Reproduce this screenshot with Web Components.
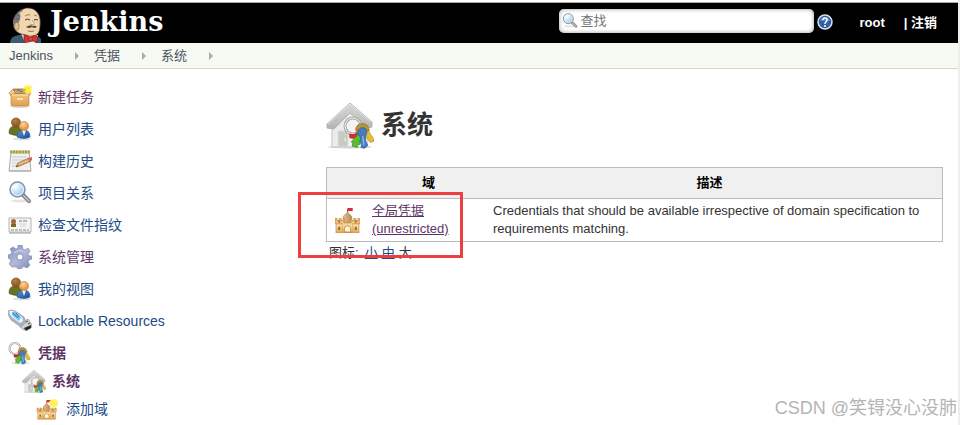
<!DOCTYPE html>
<html lang="zh-CN">
<head>
<meta charset="utf-8">
<meta name="viewport" content="width=device-width, initial-scale=1">
<title>系统 [Jenkins]</title>
<style>
  html {
    background: #fff;
  }

  body {
    margin: 0;
    font: 13px/18px "Liberation Sans", "Noto Sans CJK SC", sans-serif;
    color: #333;
  }
</style>
</head>
<body>
<jenkins-page>
  <page-header slot="header"></page-header>
  <bread-crumbs slot="crumbs">
    <crumb-item href="#jenkins">Jenkins</crumb-item>
    <crumb-item href="#credentials">凭据</crumb-item>
    <crumb-item href="#system">系统</crumb-item>
  </bread-crumbs>
  <task-list slot="side">
    <task-link icon="box" href="#new" visited>新建任务</task-link>
    <task-link icon="users" href="#people">用户列表</task-link>
    <task-link icon="notepad" href="#history">构建历史</task-link>
    <task-link icon="search" href="#relations">项目关系</task-link>
    <task-link icon="card" href="#fingerprint">检查文件指纹</task-link>
    <task-link icon="gear" href="#manage" visited>系统管理</task-link>
    <task-link icon="users" href="#views">我的视图</task-link>
    <task-link icon="usb" href="#lockable">Lockable Resources</task-link>
    <task-link icon="keys" href="#credentials" visited current>凭据</task-link>
    <task-link icon="house" href="#system" level="1" visited current>系统</task-link>
    <task-link icon="castle-new" href="#add-domain" level="2">添加域</task-link>
  </task-list>
  <page-title icon="house">系统</page-title>
  <domain-table></domain-table>
  <icon-sizes></icon-sizes>
  <span slot="watermark">CSDN @笑锝没心没肺</span>
</jenkins-page>

<script>
// bunch of keys, shared by the credentials and the system icon
const KEYS = `
  <g stroke-linejoin="round">
    <path d="M29 25 L22 29 L17 28 L17 33 L22 34 L31 29z" fill="#d92b2b" stroke="#b32020"/>
    <path d="M28 28 L24 34 L19 38 L21 41 L20 44 L27 46 L28 42 L31 42 L30 38 L34 30z" fill="#56bd2f" stroke="#3c9a22"/>
    <path d="M36 22 L38 30 L41 35 L44 39 L49 38 L48 33 L45 29 L42 23z" fill="#e5bd39" stroke="#b78d22"/>
    <path d="M25 23 Q25 15 33 14 Q42 14 43 23 L38 25 L34 20 L29 22 L28 28z" fill="#dd7434" stroke="#b9622a"/>
    <path d="M28 20 Q33 14 41 21" fill="none" stroke="#86b03c" stroke-width="3"/>
    <path d="M28 25 Q30 18 37 20 Q42 24 38 31 L38 37 L41 43 L37 47 L32 46 L33 42 L30 38 L32 35 L31 31 Q26 30 28 25z" fill="#467dc1" stroke="#2f5f9f"/>
    <path d="M34 31 L36 43" stroke="#8db6e4" stroke-width="2"/>
  </g>`;

const CASTLE = `
  <path d="M12 1v5" stroke="#92602c"/>
  <path d="M12 0h5v3h-5z" fill="#d82d3d"/>
  <path d="M8 16V8l4-4 4 4v8z" fill="url(#keep)" stroke="#b98243" stroke-width=".7"/>
  <path d="M0 10h2v2h2v-2h2v2h2v-2h1v4h6v-4h1v2h2v-2h2v2h2v-2h2v5h-1v9H1v-9H0z" fill="url(#stone)" stroke="#c98e45" stroke-width=".7"/>
  <path d="M8 14h8M1 15h6M17 15h6" stroke="#c98e45" stroke-width=".7"/>
  <path d="M7 15v8M17 15v8" stroke="#dba65e" stroke-width=".7"/>
  <path d="M9 23v-3a3 3 0 0 1 6 0v3z" fill="#fff4dc" stroke="#b2742d" stroke-width=".7"/>
  <path d="M3 12h2v2H3zM19 12h2v2h-2z" fill="#a5703a"/>
  <path d="M3 18h2v3H3zM19 18h2v3h-2z" fill="#9f6a35"/>`;

const STONE = `
  <linearGradient id="stone" x1="0" y1="0" x2="0" y2="1">
    <stop offset="0" stop-color="#e0aa66"/><stop offset=".5" stop-color="#fbdc9f"/><stop offset="1" stop-color="#e2a354"/>
  </linearGradient>
  <linearGradient id="keep" x1="0" y1="0" x2="1" y2="0">
    <stop offset="0" stop-color="#dfbf91"/><stop offset="1" stop-color="#b98a55"/>
  </linearGradient>`;

const ICONS = {
  box: {
    size: 24,
    art: `
      <defs><linearGradient id="board" x1="0" y1="0" x2="0" y2="1">
        <stop offset="0" stop-color="#f2c57d"/><stop offset="1" stop-color="#dd9d4d"/>
      </linearGradient></defs>
      <ellipse cx="12" cy="21" rx="10" ry="2" fill="#ddd"/>
      <path d="M5 4h14l3 5H2z" fill="#a6783f" stroke="#c58a42"/>
      <path d="M7 5h9l1 3H7z" fill="#b7a88c"/>
      <path d="M9 6l2-1 2 2 2-1" fill="none" stroke="#786c57"/>
      <path d="M5 4L1 8l2 3h3l1-3zM19 4l4 4-2 3h-3l-1-3z" fill="#f4cf92" stroke="#c98d45" stroke-width=".7"/>
      <path d="M3 9h18v10q0 2-2 2H5q-2 0-2-2z" fill="url(#board)" stroke="#c58640" stroke-width=".7"/>
      <path d="M4 10h16" stroke="#ffe4ac"/>
      <path d="M9 13h6v2H9z" fill="#fbe1aa"/>
      <circle cx="20" cy="4" r="5" fill="#fff45e" opacity=".5"/>
      <path d="M20 0l1 2 3 0-2 2 1 3-3-1-3 1 1-3-2-2h3z" fill="#fff025"/>`,
  },
  users: {
    size: 24,
    art: `
      <defs>
        <radialGradient id="skin" cx=".4" cy=".3" r=".8"><stop offset="0" stop-color="#ffd197"/><stop offset="1" stop-color="#d98427"/></radialGradient>
        <radialGradient id="tan" cx=".4" cy=".3" r=".8"><stop offset="0" stop-color="#b98045"/><stop offset="1" stop-color="#7d4a1c"/></radialGradient>
        <linearGradient id="shirt" x1="0" y1="0" x2="1" y2="1"><stop offset="0" stop-color="#6195d7"/><stop offset="1" stop-color="#174995"/></linearGradient>
      </defs>
      <ellipse cx="14" cy="22" rx="9" ry="1.5" fill="#ddd"/>
      <path d="M1 16q0-7 6-7 7 0 8 8-6 3-13 0z" fill="#667323" stroke="#535f1d" stroke-width=".7"/>
      <circle cx="8" cy="5.5" r="4.5" fill="url(#tan)" stroke="#7d4d20" stroke-width=".7"/>
      <path d="M9 20q0-7 7-7 6 0 6 7-6 3-13 0z" fill="url(#shirt)" stroke="#2d5c9d" stroke-width=".7"/>
      <path d="M14 13l2 6 2-6z" fill="#eef5ff"/>
      <circle cx="16" cy="9" r="4.5" fill="url(#skin)" stroke="#c98340" stroke-width=".7"/>`,
  },
  notepad: {
    size: 24,
    art: `
      <path d="M3 3h18l2 19H1z" fill="#f1f2ef" stroke="#aaada9"/>
      <path d="M2 1h20v4H2z" fill="#d4cb82"/>
      <path d="M3 2v2M6 2v2M9 2v2M12 2v2M15 2v2M18 2v2M21 2v2" stroke="#5c7050"/>
      <path d="M4 8h15M4 11h13M4 14h6M4 17h4" stroke="#c5cacb"/>
      <path d="M8 18l2-4 11-5 2 3-11 5z" fill="#d6a466" stroke="#9a6844" stroke-width=".7"/>
      <path d="M11 15l11-4" stroke="#f3c890"/>
      <path d="M20 9l4-1v3l-3 2z" fill="#d2695a"/>
      <path d="M8 18l2-1-1-1z" fill="#393430"/>
      <path d="M1 22h22" stroke="#aaa"/>`,
  },
  search: {
    size: 24,
    art: `
      <defs><radialGradient id="lens" cx=".35" cy=".3" r=".8">
        <stop offset="0" stop-color="#fff"/><stop offset=".5" stop-color="#c4e0f6"/><stop offset="1" stop-color="#8db9e2"/>
      </radialGradient></defs>
      <ellipse cx="11" cy="20" rx="8" ry="1.5" fill="#e4e4e4"/>
      <path d="M15 14l6 6" stroke="#777" stroke-width="4" stroke-linecap="round"/>
      <path d="M16 15l5 5" stroke="#bbb" stroke-width="2" stroke-linecap="round"/>
      <circle cx="9.5" cy="8.5" r="7.5" fill="url(#lens)" stroke="#8294a8" stroke-width="1.5"/>
      <circle cx="9.5" cy="8.5" r="6" fill="none" stroke="#edf7ff"/>
      <path d="M5 8q1-4 5-4" fill="none" stroke="#fff" stroke-width="1.5"/>`,
  },
  card: {
    size: 24,
    art: `
      <path d="M1 5h22v14H1z" fill="#f4f4f1" stroke="#b4b4b4"/>
      <path d="M1 20h22" stroke="#999"/>
      <path d="M3 14v-3q3-2 5 0v3z" fill="#5f7d2b"/>
      <circle cx="5.5" cy="8.5" r="2.5" fill="#a86530"/>
      <path d="M4 11l2 3 2-3" fill="#9c4e28"/>
      <path d="M11 8h3M15 8h4" stroke="#777"/>
      <path d="M11 11h8M12 13h6" stroke="#d4d4d4"/>
      <path d="M3 17h18" stroke="#888" stroke-dasharray="3 1"/>`,
  },
  gear: {
    size: 24,
    art: `
      <defs><linearGradient id="steel" x1="0" y1="0" x2="1" y2="1">
        <stop offset="0" stop-color="#7f88b4"/><stop offset=".5" stop-color="#b3bbdb"/><stop offset="1" stop-color="#7983b1"/>
      </linearGradient></defs>
      <ellipse cx="12" cy="22" rx="9" ry="1.5" fill="#ddd"/>
      <path fill-rule="evenodd" d="M10 0h4l1 4 2 1 3-2 2 3-2 3 1 2 3 0v3l-3 1-1 2 2 3-3 3-3-2-2 1-1 2h-3l-1-2-3-1-2 1-3-3 2-3-1-2-2-1v-3l3-1 1-2-2-3 3-2 3 2 2-1zM9 12a3 3 0 1 0 6 0 3 3 0 1 0-6 0z" fill="url(#steel)" stroke="#8790b4" stroke-width=".7"/>
      <circle cx="12" cy="12" r="3.5" fill="none" stroke="#98a1c6"/>
      <path d="M6 8q4-4 9-2" fill="none" stroke="#d5dbf0"/>`,
  },
  usb: {
    size: 24,
    art: `
      <path d="M14 14l6-4 4 6-1 3-7 2-4-3z" fill="#d0d3d3" stroke="#888b8d" stroke-width=".7"/>
      <path d="M16 19l7-3v3l-5 3z" fill="#26292b"/>
      <path d="M0 2q3-2 7 0l9 6 2 5-5 5L3 11Q0 7 0 2z" fill="#aab4c0" stroke="#8b98a5" stroke-width=".7"/>
      <path d="M1 2q3-1 6 1l7 5 1 4-3 2L4 8Q1 5 1 2z" fill="#eaf5fd"/>
      <path d="M4 3l4 0 5 5-2 4-6-5q-2-2-1-4z" fill="#6fc2ea"/>
      <path d="M5 4l5 5M8 4l3 4" stroke="#2385b8"/>
      <path d="M18 13l2-1M20 15l2-1" stroke="#444"/>`,
  },
  keys: {
    size: 48,
    art: `
      <ellipse cx="25" cy="44" rx="19" ry="3" fill="#e3e3e3"/>
      <circle cx="14" cy="15" r="11" fill="none" stroke="#999" stroke-width="4"/>
      <circle cx="14" cy="15" r="11" fill="none" stroke="#efefef" stroke-width="2"/>
      <g transform="translate(-5 -1)">${KEYS}</g>`,
  },
  house: {
    size: 48,
    art: `
      <defs>
        <linearGradient id="roof" x1="0" y1="0" x2="0" y2="1"><stop offset="0" stop-color="#d9d9d7"/><stop offset="1" stop-color="#b4b4b2"/></linearGradient>
        <linearGradient id="wall" x1="0" y1="0" x2="1" y2="1"><stop offset="0" stop-color="#e3e3e1"/><stop offset="1" stop-color="#fafafa"/></linearGradient>
      </defs>
      <ellipse cx="24" cy="46" rx="22" ry="1.5" fill="#d1d1d1"/>
      <path d="M6 24L24 8l17 15v23H6z" fill="url(#wall)" stroke="#c4c4c2"/>
      <path d="M1 27v-4L24 2l22 19v5l-5 1-17-15L8 28z" fill="url(#roof)" stroke="#b4b4b2"/>
      <path d="M2 23L24 3l21 18" fill="none" stroke="#e4e4e2"/>
      <path d="M12 30h10v16H12z" fill="#c9c9c5" stroke="#dedede"/>
      <path d="M19 37v3" stroke="#eee4a9" stroke-width="2"/>
      <circle cx="27" cy="25" r="8" fill="#f4f4f4" stroke="#aaa" stroke-width="3"/>
      <circle cx="27" cy="25" r="8" fill="none" stroke="#eee"/>
      <g transform="translate(11 12) scale(.75)">${KEYS}</g>`,
  },
  castle: {
    size: 24,
    art: `<defs>${STONE}</defs>${CASTLE}`,
  },
  'castle-new': {
    size: 24,
    art: `
      <defs>${STONE}</defs>
      <g transform="translate(1 3) scale(.8)">${CASTLE}</g>
      <circle cx="18" cy="6" r="4" fill="#fff584"/>
      <path d="M18 2l1 3 3-1-1 3 1 2-3 0-1 2-2-2-3 0 1-3-1-2h3z" fill="#fff24f"/>`,
  },
  help: {
    size: 16,
    art: `
      <circle cx="8" cy="8" r="7" fill="#315f9f" stroke="#d5e3f4" stroke-width="1.5"/>
      <path d="M3 7q1-4 5-4t5 4" fill="#608cc3"/>
      <path d="M6 6q0-2 2-2t2 2q0 1-1 2-1 0-1 2" fill="none" stroke="#fff" stroke-width="1.5"/>
      <circle cx="8" cy="12" r="1" fill="#fff"/>`,
  },
  butler: {
    size: 36,
    art: `
      <path d="M2 36q0-5 5-7l8-2 15 2 3 3v4z" fill="#3c5a70"/>
      <path d="M13 26l4 10h10l3-8z" fill="#f0eee8"/>
      <path d="M8 24Q4 20 6 12 9 3 18 1q9-1 13 7 2 5 1 12 0 7-6 9-4 1-9-1-6-1-9-4z" fill="#f1d6ae" stroke="#3b332c" stroke-width=".7"/>
      <path d="M6 18Q4 14 6 11 9 4 16 2q-2 3-5 4 3 2 0 9l-3 2z" fill="#77787b"/>
      <path d="M7 8q3-1 4 1M6 12q3-1 5 0" stroke="#4e5054" stroke-width=".7"/>
      <path d="M7 16q4-2 4 3t-3 4q-3-3-1-7z" fill="#e5bd91" stroke="#8e6d50" stroke-width=".7"/>
      <path d="M17 9q3-2 5-1M26 8l3 1" stroke="#73583f" stroke-width=".7"/>
      <path d="M17 13q3-2 5 0M26 13q2-1 4 0" stroke="#4c3c2f"/>
      <path d="M24 13q4 4 1 5l-3-1" fill="#f7dfbb" stroke="#ab845d" stroke-width=".7"/>
      <path d="M18 20q4-3 7-1 3-1 4 1-3 2-5 0-3 2-6 0z" fill="#5c4a3d"/>
      <path d="M20 24q3 1 6 0" stroke="#9c7356"/>
      <path d="M16 28q3-1 6 3 4-4 7-2l1 6-6-1-8 2z" fill="#d3342e" stroke="#7c2021" stroke-width=".7"/>
      <path d="M21 30h3v4h-3z" fill="#ed5546" stroke="#7c2021" stroke-width=".7"/>`,
  },
};

/**
 * Drawn icon, picked by the "name" attribute. Its box follows --icon-size.
 */
class JkIcon extends HTMLElement {
  connectedCallback() {
    const { size, art } = ICONS[this.getAttribute('name')];
    this.attachShadow({ mode: 'open' }).innerHTML = `
      <style>
        :host {
          display: block;
          flex: none;
          width: var(--icon-size, 24px);
          height: var(--icon-size, 24px);
        }

        svg {
          display: block;
          width: 100%;
          height: 100%;
        }
      </style>
      <svg viewBox="0 0 ${size} ${size}" fill="none" aria-hidden="true">${art}</svg>
    `;
  }
}

/**
 * Page frame: header, breadcrumbs, side panel and main panel
 */
class JenkinsPage extends HTMLElement {
  constructor() {
    super();
    this.attachShadow({ mode: 'open' }).innerHTML = `
      <style>
        :host {
          display: flex;
          flex-direction: column;
          box-sizing: border-box;
          min-height: 100vh;
          position: relative;
          border-right: 2px solid #eee;
        }

        .top {
          height: 2px;
          border-bottom: 1px solid #aaa;
        }

        .columns {
          display: flex;
          align-items: flex-start;
        }

        aside {
          flex: none;
          width: 310px;
          padding-top: 12px;
        }

        main {
          flex: 1;
          min-width: 0;
          padding: 32px 15px 0 16px;
        }

        .watermark {
          position: absolute;
          right: 1px;
          bottom: 6px;
          font-size: 18px;
          line-height: 22px;
          color: #b4b4b4;
        }
      </style>
      <div class="top"></div>
      <slot name="header"></slot>
      <slot name="crumbs"></slot>
      <div class="columns">
        <aside><slot name="side"></slot></aside>
        <main><slot></slot></main>
      </div>
      <div class="watermark"><slot name="watermark"></slot></div>
    `;
  }
}

/**
 * Black bar with the logo, the search box and the account links
 */
class PageHeader extends HTMLElement {
  constructor() {
    super();
    this.attachShadow({ mode: 'open' }).innerHTML = `
      <style>
        :host {
          display: flex;
          align-items: center;
          height: 40px;
          padding: 0 21px 0 8px;
          background: #000;
          color: #fff;
          font-weight: bold;
        }

        a {
          color: inherit;
          text-decoration: none;
        }

        .logo {
          display: flex;
          align-items: center;
          align-self: flex-end;
          gap: 6px;
          margin-right: auto;
          font: bold 27px/30px "DejaVu Serif", serif;
          --icon-size: 36px;
        }

        .logo span {
          padding-bottom: 6px;
        }

        .search {
          display: flex;
          align-items: center;
          gap: 2px;
          box-sizing: border-box;
          width: 255px;
          height: 24px;
          margin: 0 3px 4px 0;
          padding: 0 3px;
          border-radius: 5px;
          background: #fff;
          box-shadow: inset 0 0 4px #999;
          --icon-size: 16px;
        }

        input {
          flex: 1;
          min-width: 0;
          padding: 0;
          border: 0;
          outline: 0;
          background: none;
          font: inherit;
          font-weight: normal;
          color: #333;
        }

        input::placeholder {
          color: #777;
        }

        .help {
          margin: 0 26px 2px 0;
          --icon-size: 16px;
        }

        .user {
          margin-right: 19px;
        }
      </style>
      <a class="logo" href="#home"><jk-icon name="butler"></jk-icon><span>Jenkins</span></a>
      <label class="search">
        <jk-icon name="search"></jk-icon>
        <input type="text" placeholder="查找" aria-label="查找">
      </label>
      <a class="help" href="#help" aria-label="帮助"><jk-icon name="help"></jk-icon></a>
      <a class="user" href="#user">root</a>
      <span>| <a href="#logout">注销</a></span>
    `;
  }
}

class BreadCrumbs extends HTMLElement {
  constructor() {
    super();
    this.attachShadow({ mode: 'open' }).innerHTML = `
      <style>
        :host {
          display: block;
          border-bottom: 1px solid #d3d7cf;
          background: #f6faf2;
        }

        nav {
          display: flex;
          gap: 15px;
          height: 25px;
          padding-left: 9px;
        }
      </style>
      <nav><slot></slot></nav>
    `;
  }
}

class CrumbItem extends HTMLElement {
  connectedCallback() {
    this.attachShadow({ mode: 'open' }).innerHTML = `
      <style>
        :host {
          display: flex;
          align-items: center;
          gap: 22px;
        }

        a {
          color: #4d545d;
          text-decoration: none;
        }

        i {
          border: 4px solid transparent;
          border-left-color: #aaa;
          border-right: 0;
        }
      </style>
      <a href="${this.getAttribute('href')}"><slot></slot></a><i></i>
    `;
  }
}

class TaskList extends HTMLElement {
  constructor() {
    super();
    this.attachShadow({ mode: 'open' }).innerHTML = `
      <style>
        :host {
          display: block;
          padding-left: 8px;
        }
      </style>
      <nav><slot></slot></nav>
    `;
  }
}

/**
 * One task of the side panel; "level" indents it below its parent
 */
class TaskLink extends HTMLElement {
  connectedCallback() {
    this.attachShadow({ mode: 'open' }).innerHTML = `
      <style>
        :host {
          display: block;
          font-size: 14px;
          line-height: 24px;
          --icon-size: 24px;
        }

        a {
          display: flex;
          align-items: center;
          gap: 6px;
          padding: 4px 0;
          color: #204a87;
          text-decoration: none;
        }

        :host([visited]) a {
          color: #5c3566;
        }

        :host([current]) a {
          font-weight: bold;
        }

        :host([level]) a {
          padding: 0 0 4px 14px;
        }

        :host([level="2"]) a {
          padding-left: 28px;
        }
      </style>
      <a href="${this.getAttribute('href')}">
        <jk-icon name="${this.getAttribute('icon')}"></jk-icon>
        <slot></slot>
      </a>
    `;
  }
}

class PageTitle extends HTMLElement {
  connectedCallback() {
    this.attachShadow({ mode: 'open' }).innerHTML = `
      <style>
        :host {
          display: block;
          margin-bottom: 18px;
        }

        h1 {
          display: flex;
          align-items: center;
          gap: 7px;
          margin: 0;
          font-size: 26px;
          line-height: 48px;
          --icon-size: 48px;
        }
      </style>
      <h1><jk-icon name="${this.getAttribute('icon')}"></jk-icon><slot></slot></h1>
    `;
  }
}

/**
 * Credential domains, with a red frame over the global one
 */
class DomainTable extends HTMLElement {
  constructor() {
    super();
    this.attachShadow({ mode: 'open' }).innerHTML = `
      <style>
        :host {
          display: block;
          position: relative;
        }

        table {
          width: 100%;
          border: 1px solid #bbb;
          border-spacing: 0;
        }

        th {
          padding: 6px 4px;
          border-bottom: 1px solid #bbb;
          background: #f0f0f0;
          color: #000;
        }

        th:last-child {
          padding-right: 16px;
        }

        td {
          padding: 3px 4px;
          vertical-align: top;
        }

        .icon {
          width: 29px;
          padding-left: 8px;
          vertical-align: middle;
          --icon-size: 25px;
        }

        .name {
          width: 113px;
        }

        a {
          color: #5c3566;
        }

        .frame {
          position: absolute;
          top: 25px;
          left: -28px;
          box-sizing: border-box;
          width: 165px;
          height: 66px;
          border: 3px solid #ec4040;
          pointer-events: none;
        }
      </style>
      <table>
        <thead>
          <tr><th></th><th>域</th><th>描述</th></tr>
        </thead>
        <tbody>
          <tr>
            <td class="icon"><jk-icon name="castle"></jk-icon></td>
            <td class="name"><a href="#global">全局凭据 (unrestricted)</a></td>
            <td>Credentials that should be available irrespective of domain specification to requirements matching.</td>
          </tr>
        </tbody>
      </table>
      <div class="frame"></div>
    `;
  }
}

class IconSizes extends HTMLElement {
  constructor() {
    super();
    this.attachShadow({ mode: 'open' }).innerHTML = `
      <style>
        :host {
          display: flex;
          gap: 4px;
          padding: 2px 3px;
        }

        .label {
          margin-right: 2px;
        }

        a {
          color: #204a87;
        }
      </style>
      <span class="label">图标:</span>
      <a href="#small">小</a>
      <a href="#medium">中</a>
      <span>大</span>
    `;
  }
}

customElements.define('jk-icon', JkIcon);
customElements.define('jenkins-page', JenkinsPage);
customElements.define('page-header', PageHeader);
customElements.define('bread-crumbs', BreadCrumbs);
customElements.define('crumb-item', CrumbItem);
customElements.define('task-list', TaskList);
customElements.define('task-link', TaskLink);
customElements.define('page-title', PageTitle);
customElements.define('domain-table', DomainTable);
customElements.define('icon-sizes', IconSizes);
</script>
</body>
</html>
